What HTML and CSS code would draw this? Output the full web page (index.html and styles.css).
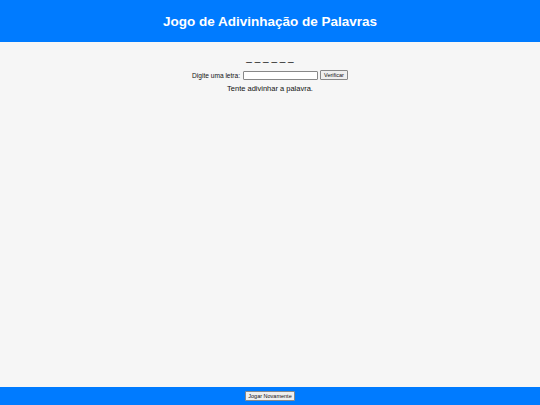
FILE: index.html
```html
<!DOCTYPE html>
<html lang="pt">
<head>
<meta charset="UTF-8">
<title>Jogo de Adivinhação de Palavras</title>
<link rel="stylesheet" href="styles.css">
</head>
<body>
<header class="topo">
 <h1>Jogo de Adivinhação de Palavras</h1>
</header>
<main class="jogo">
 <div class="palavra">_ _ _ _ _ _</div>
 <div class="entrada">
  <label for="letra">Digite uma letra:</label>
  <input type="text" id="letra" maxlength="1">
  <button type="button">Verificar</button>
 </div>
 <p class="mensagem">Tente adivinhar a palavra.</p>
</main>
<footer class="rodape">
 <button type="button">Jogar Novamente</button>
</footer>
</body>
</html>
```
FILE: styles.css
```css
html,body{height:100%}
body{margin:0;font-family:"Liberation Sans",Arial,sans-serif;background:#f6f6f6;color:#111;display:flex;flex-direction:column}
.topo{background:#007bff;color:#fff;height:42px;display:flex;align-items:center;justify-content:center}
.topo h1{margin:0;font-size:13.5px;font-weight:bold}
.jogo{flex:1;text-align:center;padding-top:10px}
.palavra{font-size:10px;line-height:12px}
.entrada{margin-top:6px;display:flex;justify-content:center;align-items:center;gap:2px;font-size:6.6px}
.entrada label{margin-right:1px}
.entrada input{width:71px;height:7px;font-size:7px;padding:0 1px;border:1px solid #888;border-radius:1px}
.entrada button,.rodape button{font-family:"Liberation Sans",Arial,sans-serif;font-size:5.5px;padding:1px 3px;border:1px solid #888;border-radius:1px;background:#efefef;color:#111}
.rodape button{padding:1px 2px}
.mensagem{margin:4px 0 0;font-size:7.5px}
.rodape{background:#007bff;height:18px;display:flex;align-items:center;justify-content:center}
```
